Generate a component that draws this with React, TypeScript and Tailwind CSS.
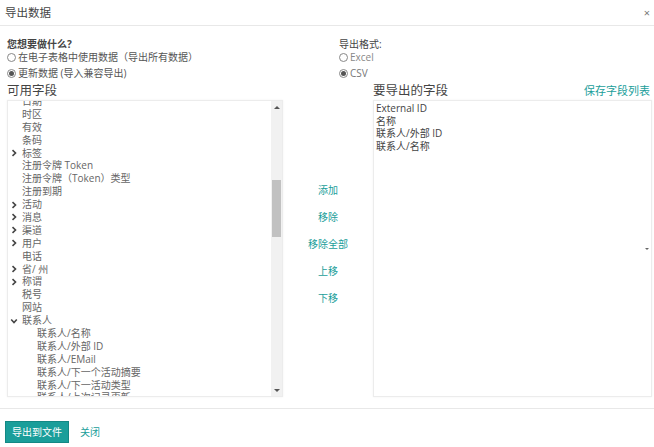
import React from 'react';

const font = { fontFamily: '"Open Sans", "Noto Sans CJK SC", sans-serif' };

type Item = { label: string; level: 0 | 1; arrow?: 'right' | 'down' };

const fields: Item[] = [
  { label: '日期', level: 0 },
  { label: '时区', level: 0 },
  { label: '有效', level: 0 },
  { label: '条码', level: 0 },
  { label: '标签', level: 0, arrow: 'right' },
  { label: '注册令牌 Token', level: 0 },
  { label: '注册令牌（Token）类型', level: 0 },
  { label: '注册到期', level: 0 },
  { label: '活动', level: 0, arrow: 'right' },
  { label: '消息', level: 0, arrow: 'right' },
  { label: '渠道', level: 0, arrow: 'right' },
  { label: '用户', level: 0, arrow: 'right' },
  { label: '电话', level: 0 },
  { label: '省/ 州', level: 0, arrow: 'right' },
  { label: '称谓', level: 0, arrow: 'right' },
  { label: '税号', level: 0 },
  { label: '网站', level: 0 },
  { label: '联系人', level: 0, arrow: 'down' },
  { label: '联系人/名称', level: 1 },
  { label: '联系人/外部 ID', level: 1 },
  { label: '联系人/EMail', level: 1 },
  { label: '联系人/下一个活动摘要', level: 1 },
  { label: '联系人/下一活动类型', level: 1 },
  { label: '联系人/上次记录更新', level: 1 },
];

const exportFields = ['External ID', '名称', '联系人/外部 ID', '联系人/名称'];
const actions = ['添加', '移除', '移除全部', '上移', '下移'];

const Radio = ({ checked }: { checked?: boolean }) => (
  <span className="inline-flex items-center justify-center w-[9px] h-[9px] rounded-full border border-[#888] bg-white mr-[2px] shrink-0">
    {checked && <span className="w-[5px] h-[5px] rounded-full bg-[#555]" />}
  </span>
);

const Chevron = ({ dir }: { dir: 'right' | 'down' }) => (
  <svg width="8" height="8" viewBox="0 0 8 8" className="shrink-0">
    {dir === 'right' ? (
      <path d="M2.5 1.2 L5.5 4 L2.5 6.8" fill="none" stroke="#444" strokeWidth="1.6" />
    ) : (
      <path d="M1.2 2.5 L4 5.5 L6.8 2.5" fill="none" stroke="#444" strokeWidth="1.6" />
    )}
  </svg>
);

export default function App() {
  return (
    <div className="w-[654px] h-[447px] bg-white text-[#555] overflow-hidden" style={font}>
      {/* header */}
      <div className="h-[26px] flex items-center justify-between pl-[5px] pr-[4px] border-b border-[#e8e8e8]">
        <span className="text-[11.5px] text-[#444]">导出数据</span>
        <span className="text-[11px] text-[#777] leading-none">×</span>
      </div>

      {/* options */}
      <div className="flex pt-[12px] h-[57px]">
        <div className="w-[339px] pl-[7px] text-[10px]">
          <div className="font-bold text-[#444] leading-[13px]">您想要做什么?</div>
          <div className="flex items-center leading-[13px] text-[#555]">
            <Radio />
            在电子表格中使用数据（导出所有数据）
          </div>
          <div className="flex items-center leading-[13px] mt-[3px] text-[#555]">
            <Radio checked />
            更新数据 (导入兼容导出)
          </div>
        </div>
        <div className="text-[10px]">
          <div className="text-[#444] leading-[13px]">导出格式:</div>
          <div className="flex items-center leading-[13px] text-[#888]">
            <Radio />
            Excel
          </div>
          <div className="flex items-center leading-[13px] mt-[3px] text-[#777]">
            <Radio checked />
            CSV
          </div>
        </div>
      </div>

      {/* field panes */}
      <div className="flex pl-[7px] pr-[2px]">
        <div className="w-[276px] flex flex-col">
          <div className="h-[17px] text-[12.5px] text-[#444] leading-[15px]">可用字段</div>
          <div className="h-[297px] flex border border-[#ececec] shadow-[0_0_2px_rgba(0,0,0,0.06)]">
            <div className="flex-1 overflow-hidden pl-[2px]">
              <div className="mt-[-6px]">
                {fields.map((f) => (
                  <div
                    key={f.label}
                    className={`flex items-center h-[12.9px] text-[10px] text-[#666] whitespace-nowrap ${f.level === 1 ? 'pl-[15px]' : ''}`}
                  >
                    <span className="w-[12px] flex items-center">{f.arrow && <Chevron dir={f.arrow} />}</span>
                    {f.label}
                  </div>
                ))}
              </div>
            </div>
            <div className="w-[11px] bg-[#f1f1f1] flex flex-col items-center">
              <div className="h-[12px] flex items-center justify-center">
                <span className="w-0 h-0 border-l-[3px] border-r-[3px] border-b-[3px] border-l-transparent border-r-transparent border-b-[#555]" />
              </div>
              <div className="h-[67px]" />
              <div className="w-[9px] h-[57px] bg-[#c1c1c1]" />
              <div className="flex-1" />
              <div className="h-[12px] flex items-center justify-center">
                <span className="w-0 h-0 border-l-[3px] border-r-[3px] border-t-[3px] border-l-transparent border-r-transparent border-t-[#555]" />
              </div>
            </div>
          </div>
        </div>

        <div className="w-[90px] flex flex-col items-center pt-[101px] gap-[14px]">
          {actions.map((a) => (
            <span key={a} className="text-[10px] leading-[13px] text-[#1a9e9a]">{a}</span>
          ))}
        </div>

        <div className="flex-1 flex flex-col">
          <div className="h-[17px] flex items-start justify-between pr-[2px]">
            <span className="text-[12.5px] text-[#444] leading-[15px]">要导出的字段</span>
            <span className="text-[11px] text-[#1a9e9a] leading-[15px]">保存字段列表</span>
          </div>
          <div className="h-[297px] border border-[#ececec] shadow-[0_0_2px_rgba(0,0,0,0.06)] flex">
            <div className="flex-1 pl-[2px] pt-[1px]">
              {exportFields.map((f) => (
                <div key={f} className="h-[12.5px] leading-[12.5px] text-[10px] text-[#444]">{f}</div>
              ))}
            </div>
            <div className="w-[8px] flex items-center justify-center">
              <span className="w-0 h-0 border-l-[2px] border-r-[2px] border-t-[2px] border-l-transparent border-r-transparent border-t-[#666]" />
            </div>
          </div>
        </div>
      </div>

      {/* footer */}
      <div className="mt-[11px] border-t border-[#e8e8e8] pt-[12px] pl-[5px] flex items-center gap-[11px]">
        <button className="h-[22px] px-[6px] bg-[#1a9e9a] text-white text-[10px] border border-[#138884]">导出到文件</button>
        <span className="text-[10px] text-[#1a9e9a]">关闭</span>
      </div>
    </div>
  );
}
